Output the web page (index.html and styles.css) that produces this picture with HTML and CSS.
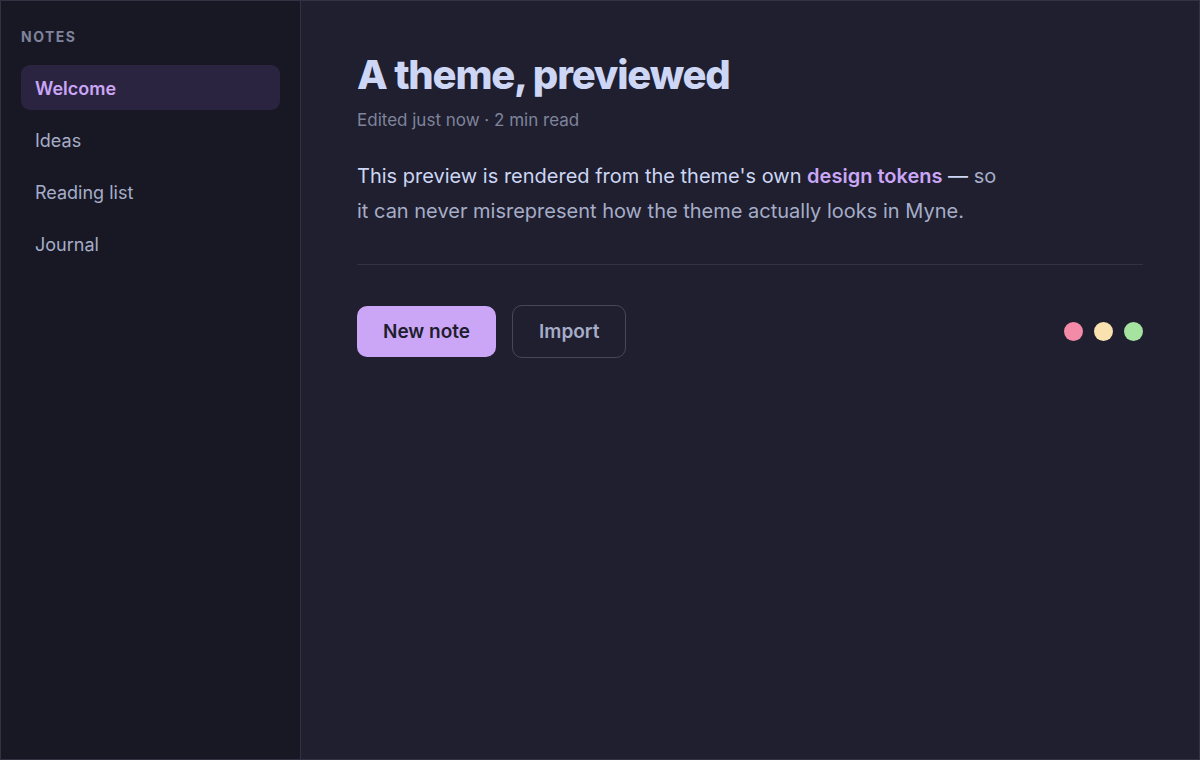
FILE: index.html
```html
<!DOCTYPE html>
<html lang="en">
<head>
  <meta charset="UTF-8">
  <title>Theme Preview</title>
  <link rel="stylesheet" href="styles.css">
</head>
<body>

<div class="app">
  <aside class="sidebar">
    <div class="side-label">Notes</div>
    <nav class="note-list">
      <a class="note-link active">Welcome</a>
      <a class="note-link">Ideas</a>
      <a class="note-link">Reading list</a>
      <a class="note-link">Journal</a>
    </nav>
  </aside>

  <main class="editor">
    <h1 class="title">A theme, previewed</h1>
    <div class="meta">Edited just now · 2 min read</div>

    <p class="body-text">
      <span class="lead">This preview is rendered from the theme's own</span>
      <span class="accent">design tokens</span> <span class="lead">—</span> so
      it can never misrepresent how the theme actually looks in Myne.
    </p>

    <hr class="divider">

    <div class="actions">
      <button class="btn btn-primary">New note</button>
      <button class="btn btn-ghost">Import</button>

      <!-- palette swatches -->
      <div class="swatches">
        <span class="dot red"></span>
        <span class="dot yellow"></span>
        <span class="dot green"></span>
      </div>
    </div>
  </main>
</div>

</body>
</html>
```

FILE: styles.css
```css
* {
  box-sizing: border-box;
}

html, body {
  margin: 0;
  height: 100%;
}

body {
  font-family: Inter, "Noto Sans", sans-serif;
  background-color: #1e1e2e;
  color: #cdd6f4;
}

.app {
  display: flex;
  height: 760px;
  border: 1px solid #313244;
}

.sidebar {
  width: 300px;
  flex-shrink: 0;
  background-color: #181825;
  border-right: 1px solid #313244;
  padding: 27px 20px;
}

.side-label {
  font-size: 14px;
  line-height: 17px;
  font-weight: 700;
  letter-spacing: 1.5px;
  text-transform: uppercase;
  color: #7f849c;
  margin-bottom: 20px;
}

.note-list {
  display: flex;
  flex-direction: column;
  gap: 7px;
}

.note-link {
  display: block;
  height: 45px;
  line-height: 47px;
  padding: 0 14px;
  border-radius: 9px;
  font-size: 18px;
  color: #a6adc8;
  cursor: pointer;
}

.note-link.active {
  background-color: #2b2440;
  color: #cba6f7;
  font-weight: 600;
}

.editor {
  flex: 1;
  background-color: #1f1f2f;
  padding: 49px 56px 0 56px;
}

.title {
  margin: 0;
  font-size: 40px;
  font-weight: 800;
  letter-spacing: -1.2px;
  line-height: 50px;
  color: #cdd6f4;
}

.meta {
  margin-top: 10px;
  font-size: 17px;
  line-height: 20px;
  color: #7f849c;
}

.body-text {
  margin: 29px 0 0;
  max-width: 642px;
  font-size: 20px;
  line-height: 35px;
  color: #a6adc8;
}

.lead {
  color: #cdd6f4;
}

.accent {
  color: #cba6f7;
  font-weight: 600;
}

.divider {
  border: none;
  border-top: 1px solid #313244;
  margin: 35px 0 0;
}

.actions {
  display: flex;
  align-items: center;
  gap: 16px;
  margin-top: 40px;
}

.btn {
  font-family: inherit;
  font-size: 19px;
  font-weight: 600;
  border-radius: 10px;
  cursor: pointer;
}

.btn-primary {
  height: 51px;
  padding: 0 26px;
  background-color: #cba6f7;
  color: #1e1e2e;
  border: none;
}

.btn-ghost {
  height: 53px;
  padding: 0 26px;
  background-color: transparent;
  color: #a6adc8;
  border: 1px solid #45475a;
}

.swatches {
  margin-left: auto;
  display: flex;
  gap: 11px;
}

.dot {
  width: 19px;
  height: 19px;
  border-radius: 50%;
}

.dot.red { background-color: #f38ba8; }
.dot.yellow { background-color: #f9e2af; }
.dot.green { background-color: #a6e3a1; }
```
